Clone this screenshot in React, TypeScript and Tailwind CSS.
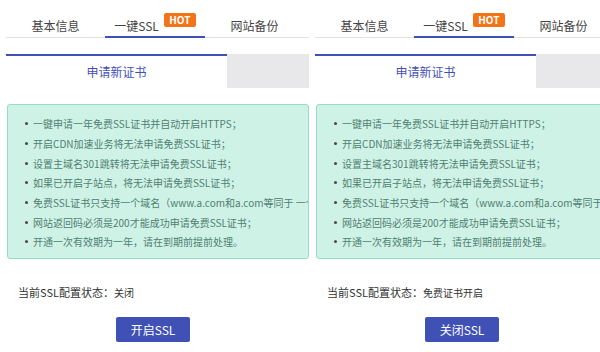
import React from 'react';

const tips = [
    '一键申请一年免费SSL证书并自动开启HTTPS；',
    '开启CDN加速业务将无法申请免费SSL证书；',
    '设置主域名301跳转将无法申请免费SSL证书；',
    '如果已开启子站点，将无法申请免费SSL证书；',
    '免费SSL证书只支持一个域名（www.a.com和a.com等同于 一个域名）；',
    '网站返回码必须是200才能成功申请免费SSL证书；',
    '开通一次有效期为一年，请在到期前提前处理。',
];

interface SslPanelProps {
    status: string;
    action: string;
}

const SslPanel: React.FC<SslPanelProps> = ({ status, action }) => {
    return (
        <div className="w-[303px] shrink-0 h-full bg-white">
            {/* top tabs */}
            <div className="flex h-[38px] border-b border-[#e2e2e2]">
                <div className="w-[99px] flex items-center justify-center pt-[15px] text-[12px] text-[#444]">基本信息</div>
                <div className="w-[100px] flex items-center justify-center pt-[15px] text-[12px] text-[#444] border-b-2 border-[#3f51b5] -mb-px">
                    <span>一键SSL</span>
                    <span className="ml-[5px] -mt-[12px] h-[14px] w-[32px] flex items-center justify-center bg-[#f27318] text-white text-[10px] font-bold leading-none rounded-[2px]">HOT</span>
                </div>
                <div className="w-[99px] flex items-center justify-center pt-[15px] text-[12px] text-[#444]">网站备份</div>
            </div>

            {/* sub tabs */}
            <div className="flex h-[34px] mt-[16px]">
                <div className="w-[221px] border-t-2 border-[#3f51b5] flex items-center justify-center text-[12px] text-[#3f51b5]">申请新证书</div>
                <div className="flex-1 bg-[#e8e8ea]" />
            </div>

            {/* notice */}
            <div className="ml-px mt-[16px] h-[155px] border border-[#97dcc6] bg-[#cff2e7] rounded-[3px] overflow-hidden pt-[9px] pl-[17px]">
                <ul>
                    {tips.map(t => (
                        <li key={t} className="h-[19.7px] flex items-center whitespace-nowrap text-[10px] text-[#4f8070]">
                            <span className="w-[3px] h-[3px] rounded-full bg-[#4a4a4a] mr-[5px] shrink-0" />
                            {t}
                        </li>
                    ))}
                </ul>
            </div>

            <p className="mt-[25px] pl-[12px] text-[11px] leading-[16px] text-[#333]">
                当前SSL配置状态：<span className="text-[10px]">{status}</span>
            </p>

            <button className="mt-[16px] ml-[110px] w-[74px] h-[25px] bg-[#3f51b5] text-white text-[12px] rounded-[2px]">
                {action}
            </button>
        </div>
    );
};

export default function App() {
    return (
        <div className="w-[600px] h-[352px] bg-white overflow-hidden flex font-['Noto_Sans_CJK_SC',sans-serif]">
            <div className="pl-[6px] shrink-0 h-full">
                <SslPanel status="关闭" action="开启SSL" />
            </div>
            <div className="pl-[6px] shrink-0 h-full">
                <SslPanel status="免费证书开启" action="关闭SSL" />
            </div>
        </div>
    );
}
